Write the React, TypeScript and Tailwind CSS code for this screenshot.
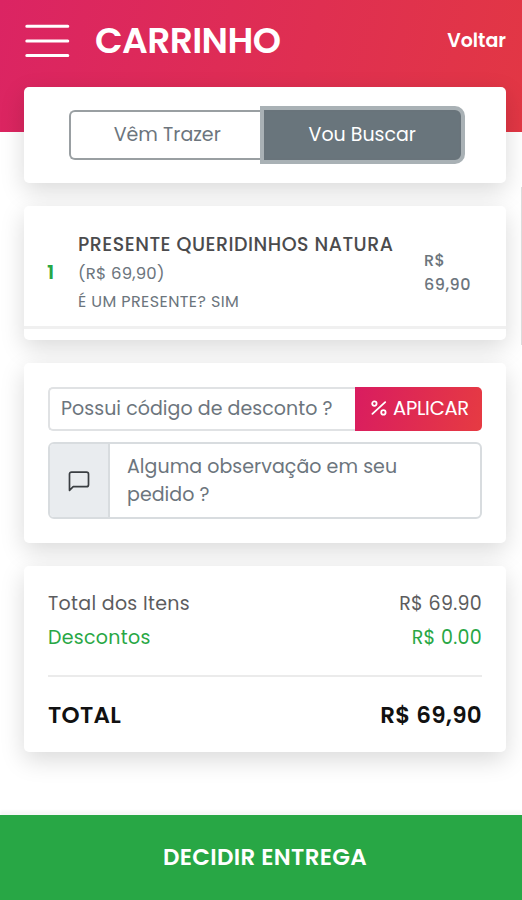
import type { ReactNode } from "react";

const OBSERVATION = ["Alguma observação em seu", "pedido ?"];

function Card({ className, children }: { className: string; children: ReactNode }) {
  return (
    <section className={`rounded-[5px] bg-white shadow-[0_8px_24px_rgba(0,0,0,0.15)] ${className}`}>
      {children}
    </section>
  );
}

function MenuIcon() {
  return (
    <svg width="46" height="34" viewBox="0 0 46 34" stroke="currentColor" strokeWidth="3" strokeLinecap="round">
      <path d="M2.8 2.3h41M2.8 17h41M2.8 31.5h41" />
    </svg>
  );
}

function CommentIcon() {
  return (
    <svg width="22" height="22" viewBox="0 0 22 22" fill="none" stroke="currentColor" strokeWidth="1.7" strokeLinejoin="round">
      <path d="M1.5 20.3V4.1a2 2 0 0 1 2-2h15a2 2 0 0 1 2 2v10.6a2 2 0 0 1-2 2H5.2z" />
    </svg>
  );
}

function PercentIcon() {
  return (
    <svg className="mb-[3px]" width="16" height="16" viewBox="0 0 16 16" fill="none" stroke="currentColor" strokeWidth="1.8" strokeLinecap="round">
      <circle cx="3.4" cy="3.6" r="2.2" />
      <circle cx="12.4" cy="12.4" r="2.2" />
      <path d="M14.2 2.2 1.4 13.8" />
    </svg>
  );
}

export default function App() {
  return (
    <div className="relative flex h-[900px] w-[522px] flex-col overflow-hidden bg-white font-[Poppins,Inter,sans-serif] text-[#6c757d]">
      {/* Top bar, the first card overlaps its lower edge */}
      <header className="h-[132px] shrink-0 bg-linear-[105deg,#db2463,#e23744] text-white">
        <div className="flex h-[81px] items-center pr-4 pl-6">
          <MenuIcon />
          <h1 className="ml-[25px] text-[36px] font-semibold tracking-[-0.6px]">CARRINHO</h1>
          <a href="#voltar" className="ml-auto pt-[1px] text-[19px] font-semibold">Voltar</a>
        </div>
      </header>

      <main className="relative -mt-[45px] mr-4 ml-6 flex flex-1 flex-col gap-[23px]">
        <Card className="flex h-24 px-[45px] pt-[23px]">
          <button className="h-[50px] w-[195px] rounded-l-[6px] border-2 border-r-0 border-[#999fa2] text-[19px]">
            Vêm Trazer
          </button>
          <button className="h-[50px] w-[198px] rounded-r-[6px] border-2 border-[#69747b] bg-[#69757c] text-[19px] text-white ring-4 ring-[#a9b1b5]">
            Vou Buscar
          </button>
        </Card>

        <Card className="flex h-[134px] flex-col">
          <div className="flex h-[123px] items-center border-b-[3px] border-[#f0f0f0] pl-[23px]">
            <span className="w-[31px] pt-[11px] text-[20px] font-semibold text-[#28a745]">1</span>
            <div className="w-[346px] pt-[13px]">
              <h2 className="text-[19px] leading-[29px] font-medium tracking-[0.5px] whitespace-nowrap text-[#4b4b4d]">
                PRESENTE QUERIDINHOS NATURA
              </h2>
              <p className="text-[16.5px] leading-[29px] tracking-[0.2px]">(R$ 69,90)</p>
              <p className="text-[16px] leading-[28px] tracking-[0.4px]">É UM PRESENTE? SIM</p>
            </div>
            <div className="w-[60px] pt-[14px] text-[16px] leading-6 font-medium tracking-[0.5px]">R$ 69,90</div>
          </div>
        </Card>

        <Card className="flex h-[180px] flex-col gap-[11px] px-6 pt-6">
          <div className="flex h-[44px] shrink-0">
            <div className="flex flex-1 items-center rounded-l-[5px] border-2 border-r-0 border-[#e0e2e4] pl-[11px] text-[19px] tracking-[0.04px] whitespace-nowrap">
              Possui código de desconto ?
            </div>
            <button className="flex w-[127px] items-center justify-center gap-[6px] rounded-r-[5px] bg-linear-[105deg,#d91c60,#e63b42] pl-[3px] text-[19.5px] tracking-[-0.25px] text-white">
              <PercentIcon />
              <span>APLICAR</span>
            </button>
          </div>
          <div className="flex h-[77px] shrink-0 overflow-hidden rounded-[6px] border-2 border-[#d8dcdf]">
            <div className="flex w-[60px] items-center justify-center border-r-2 border-[#d8dcdf] bg-[#e9ecef] text-[#3a3e42]">
              <CommentIcon />
            </div>
            <div className="flex-1 pt-[9px] pl-[17px] text-[19px] leading-[28px] tracking-[0.04px]">
              {OBSERVATION.map((line) => (
                <p key={line}>{line}</p>
              ))}
            </div>
          </div>
        </Card>

        <Card className="h-[186px] px-6 pt-[21px] text-[19px] tracking-[0.3px]">
          <div className="flex h-[34px] items-center justify-between text-[#5c5c5e]">
            <span>Total dos Itens</span>
            <span>R$ 69.90</span>
          </div>
          <div className="flex h-[34px] items-center justify-between text-[#28a745]">
            <span>Descontos</span>
            <span>R$ 0.00</span>
          </div>
          <hr className="mt-[20px] border-t-2 border-[#ebebeb]" />
          <div className="mt-[20px] flex h-[36px] items-center justify-between text-[23px] font-semibold text-[#111]">
            <span>TOTAL</span>
            <span>R$ 69,90</span>
          </div>
        </Card>
      </main>

      {/* Scroll thumb */}
      <div className="absolute top-[187px] right-0 h-[158px] w-px bg-[#dcdcdc]" />

      <footer className="flex h-[85px] shrink-0 items-center justify-center bg-[#28a745] text-[23px] font-semibold tracking-[0.3px] text-white shadow-[0_-4px_3px_#f7f7f7]">
        <button className="pl-2">DECIDIR ENTREGA</button>
      </footer>
    </div>
  );
}
